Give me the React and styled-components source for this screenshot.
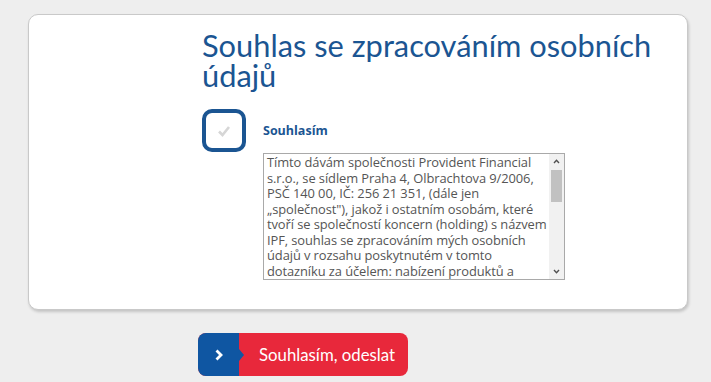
import styled, { createGlobalStyle } from 'styled-components';

const GlobalStyle = createGlobalStyle`
  body {
    margin: 0;
    background: #eeeeee;
    font-family: 'Open Sans', 'Liberation Sans', sans-serif;
  }
`;

const Page = styled.div`
  display: flex;
  flex-direction: column;
  padding: 14px 23px 0 28px;
`;

const Card = styled.div`
  box-sizing: border-box;
  height: 296px;
  background: #fff;
  border: 1px solid #c9c9c9;
  border-radius: 10px;
  box-shadow: 1px 2px 3px rgba(0, 0, 0, 0.18);
  padding: 16px 20px 0 173px;
`;

const Title = styled.h1`
  margin: 0;
  font-family: Lato, 'Liberation Sans', sans-serif;
  font-weight: 400;
  font-size: 30.8px;
  line-height: 30px;
  color: #1b5592;
  width: 470px;
`;

const ConsentRow = styled.div`
  display: flex;
  gap: 17px;
  margin-top: 18px;
`;

const Checkbox = styled.div`
  box-sizing: border-box;
  width: 44px;
  height: 43px;
  border: 4px solid #1b5592;
  border-radius: 10px;
  display: flex;
  align-items: center;
  justify-content: center;
  flex-shrink: 0;
`;

const Column = styled.div`
  display: flex;
  flex-direction: column;
`;

const Label = styled.div`
  font-weight: 700;
  font-size: 12.5px;
  color: #1b5592;
  margin-top: 14px;
  line-height: 16px;
`;

const TermsBox = styled.div`
  box-sizing: border-box;
  display: flex;
  width: 302px;
  height: 127px;
  margin-top: 14px;
  border: 1px solid #a9a9a9;
  background: #fff;
`;

const TermsText = styled.div`
  flex: 1;
  overflow: hidden;
  padding: 1px 0 0 3px;
  font-size: 12.9px;
  letter-spacing: -0.08px;
  line-height: 15.5px;
  color: #555;
`;

const ScrollTrack = styled.div`
  width: 15px;
  background: #f1f1f1;
  display: flex;
  flex-direction: column;
  align-items: stretch;
`;

const ScrollArrow = styled.div`
  height: 15px;
  display: flex;
  align-items: center;
  justify-content: center;
`;

const ScrollThumb = styled.div`
  height: 32px;
  margin: 1px 2px 0 2px;
  background: #c1c1c1;
`;

const ScrollSpacer = styled.div`
  flex: 1;
`;

const Footer = styled.div`
  padding: 23px 0 0 170px;
`;

const SubmitButton = styled.button`
  display: flex;
  align-items: stretch;
  height: 43px;
  padding: 0;
  border: none;
  border-radius: 8px;
  overflow: hidden;
  background: #e8283b;
  cursor: pointer;
`;

const ArrowPart = styled.span`
  position: relative;
  width: 41px;
  background: #0f56a2;
  display: flex;
  align-items: center;
  justify-content: center;

  &::after {
    content: '';
    position: absolute;
    right: -5px;
    top: 50%;
    margin-top: -6px;
    border-style: solid;
    border-width: 6px 0 6px 5px;
    border-color: transparent transparent transparent #0f56a2;
  }
`;

const ButtonText = styled.span`
  display: flex;
  align-items: center;
  padding: 0 13px 0 20px;
  font-family: Lato, 'Liberation Sans', sans-serif;
  font-size: 16.8px;
  color: #fff;
`;

const termsText =
  'Tímto dávám společnosti Provident Financial s.r.o., se sídlem Praha 4, Olbrachtova 9/2006, PSČ 140 00, IČ: 256 21 351, (dále jen „společnost"), jakož i ostatním osobám, které tvoří se společností koncern (holding) s názvem IPF, souhlas se zpracováním mých osobních údajů v rozsahu poskytnutém v tomto dotazníku za účelem: nabízení produktů a služeb společnosti, zasílání obchodních sdělení a marketingových informací, a to po dobu 5 let ode dne udělení tohoto souhlasu.';

function Chevron({ up }) {
  return (
    <svg width="7" height="5" viewBox="0 0 7 5">
      <path
        d={up ? 'M1 4 L3.5 1.3 L6 4' : 'M1 1 L3.5 3.7 L6 1'}
        fill="none"
        stroke="#505050"
        strokeWidth="1.4"
      />
    </svg>
  );
}

function App() {
  return (
    <>
      <GlobalStyle />
      <Page>
        <Card>
          <Title>Souhlas se zpracováním osobních údajů</Title>
          <ConsentRow>
            <Checkbox>
              <svg width="14" height="12" viewBox="0 0 14 12">
                <path d="M2 6.5 L5.5 10 L12 2" fill="none" stroke="#d6d6d6" strokeWidth="2.6" />
              </svg>
            </Checkbox>
            <Column>
              <Label>Souhlasím</Label>
              <TermsBox>
                <TermsText>{termsText}</TermsText>
                <ScrollTrack>
                  <ScrollArrow>
                    <Chevron up />
                  </ScrollArrow>
                  <ScrollThumb />
                  <ScrollSpacer />
                  <ScrollArrow>
                    <Chevron />
                  </ScrollArrow>
                </ScrollTrack>
              </TermsBox>
            </Column>
          </ConsentRow>
        </Card>
        <Footer>
          <SubmitButton>
            <ArrowPart>
              <svg width="10" height="12" viewBox="0 0 10 12">
                <path d="M2.5 1.5 L7 6 L2.5 10.5" fill="none" stroke="#fff" strokeWidth="2.8" />
              </svg>
            </ArrowPart>
            <ButtonText>Souhlasím, odeslat</ButtonText>
          </SubmitButton>
        </Footer>
      </Page>
    </>
  );
}

export default App;
